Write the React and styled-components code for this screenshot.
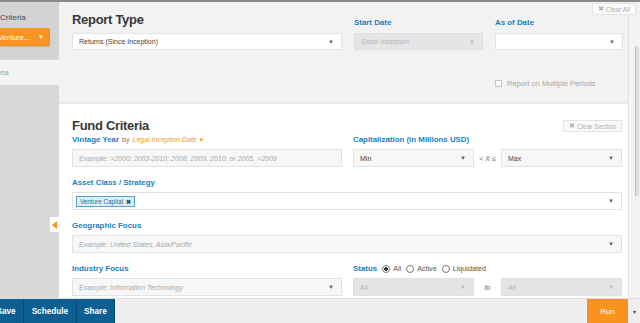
import React from "react";
import styled, { createGlobalStyle } from "styled-components";

const GlobalStyle = createGlobalStyle`
  html, body {
    margin: 0;
    padding: 0;
    background: #ffffff;
    font-family: "Liberation Sans", Arial, sans-serif;
  }
  * { box-sizing: border-box; }
`;

const Frame = styled.div`
  width: 640px;
  height: 323px;
  display: flex;
  flex-direction: column;
  border-top: 2px solid #8a8a8a;
  overflow: hidden;
`;

const Body = styled.div`
  flex: 1;
  min-height: 0;
  display: flex;
  position: relative;
`;

const Sidebar = styled.aside`
  width: 59px;
  background: #d8d8d8;
  overflow: hidden;
  display: flex;
  flex-direction: column;
`;

const SideHead = styled.div`
  background: #d3d3d3;
  height: 56px;
  padding-top: 11px;
`;

const SideLabel = styled.div`
  font-size: 8px;
  color: #4a4a4a;
  margin-left: 0;
  line-height: 10px;
`;

const OrangeButton = styled.div`
  margin-top: 5px;
  width: 50px;
  height: 18px;
  background: #f7931e;
  color: #fff;
  font-size: 7.5px;
  display: flex;
  align-items: center;
  justify-content: space-between;
  padding: 0 6px 0 0;
  border-radius: 0 2px 2px 0;
  box-shadow: 0 1px 1px rgba(0, 0, 0, 0.15);
  span:first-child { margin-left: -2px; }
`;

const SideItem = styled.div`
  margin-top: 2px;
  height: 25px;
  background: #f4f4f4;
  font-size: 7px;
  color: #9a9a9a;
  display: flex;
  align-items: center;
  span { margin-left: -14px; }
`;

const Main = styled.main`
  flex: 1;
  min-width: 0;
  display: flex;
  flex-direction: column;
  overflow: hidden;
`;

const ReportSection = styled.section`
  background: #f2f2f2;
  height: 102px;
  padding: 10px 5px 0 13px;
  border-bottom: 2px solid #e9e9e9;
  display: grid;
  grid-template-columns: 270px 129px 128px;
  grid-template-rows: auto auto 1fr;
  column-gap: 12px;
  row-gap: 5px;
  align-items: end;
`;

const Title = styled.h2`
  margin: 0;
  font-size: 13px;
  line-height: 16px;
  letter-spacing: -0.3px;
  font-weight: bold;
  color: #383838;
`;

const Label = styled.div`
  font-size: 7.9px;
  line-height: 10px;
  height: 10px;
  font-weight: bold;
  color: #1b7fc0;
  white-space: nowrap;
  display: flex;
  align-items: center;
  gap: 3px;
`;

const Small = styled.span`
  font-weight: normal;
  color: ${(p) => p.$color || "#777"};
  font-style: ${(p) => (p.$italic ? "italic" : "normal")};
  font-size: 7px;
`;

const Select = styled.div`
  height: ${(p) => p.$h || 18}px;
  width: ${(p) => (p.$w ? `${p.$w}px` : "100%")};
  background: ${(p) => (p.$disabled ? "#e5e5e5" : p.$soft ? "#f7f7f7" : "#ffffff")};
  border: 1px solid ${(p) => (p.$disabled ? "#e0e0e0" : "#e3e3e3")};
  display: flex;
  align-items: center;
  justify-content: space-between;
  padding: 0 7px 0 6px;
  font-size: 7px;
  color: ${(p) => (p.$disabled ? "#b5b5b5" : "#444")};
  font-style: ${(p) => (p.$placeholder ? "italic" : "normal")};
  ${(p) => p.$placeholder && "color: #a8a8a8;"}
  white-space: nowrap;
  overflow: hidden;
`;

const Caret = styled.span`
  font-size: 6px;
  color: ${(p) => (p.$light ? "#bbb" : "#666")};
  font-style: normal;
`;

const CheckRow = styled.div`
  grid-column: 3;
  align-self: start;
  margin-top: 24px;
  display: flex;
  align-items: center;
  gap: 5px;
  font-size: 7.5px;
  color: #a8a8a8;
`;

const CheckBox = styled.span`
  width: 7px;
  height: 7px;
  border: 1px solid #c4c4c4;
  background: #fff;
`;

const FundSection = styled.section`
  flex: 1;
  background: #ffffff;
  padding: 14px 6px 0 13px;
  display: flex;
  flex-direction: column;
`;

const TitleRow = styled.div`
  display: flex;
  justify-content: space-between;
  align-items: center;
  height: 16px;
  margin-bottom: 1px;
`;

const GhostButton = styled.div`
  font-size: 6.5px;
  color: #b0b0b0;
  border: 1px solid #e4e4e4;
  background: #f9f9f9;
  padding: 0 5px;
  height: 12px;
  display: flex;
  align-items: center;
  gap: 2px;
`;

const FieldGrid = styled.div`
  display: grid;
  grid-template-columns: 270px 269px;
  column-gap: 11px;
  row-gap: 11px;
`;

const Field = styled.div`
  grid-column: ${(p) => (p.$wide ? "1 / -1" : "auto")};
  display: flex;
  flex-direction: column;
  gap: 4px;
`;

const RangeRow = styled.div`
  display: flex;
  align-items: center;
`;

const RangeSep = styled.span`
  width: 27px;
  text-align: center;
  font-size: 7px;
  color: #666;
  font-style: ${(p) => (p.$italic ? "italic" : "normal")};
`;

const Tag = styled.span`
  font-size: 6.3px;
  color: #2b6a90;
  background: #dcf0fa;
  border: 1px solid #59a4cf;
  padding: 0 3px;
  height: 11px;
  display: inline-flex;
  align-items: center;
  gap: 3px;
  margin-left: -3px;
  b { color: #244e6b; font-size: 6px; }
`;

const Radio = styled.span`
  display: inline-flex;
  align-items: center;
  gap: 3px;
  font-weight: normal;
  color: #555;
  font-size: 7.2px;
  margin-left: 2px;
  &::before {
    content: "";
    width: 6px;
    height: 6px;
    border-radius: 50%;
    border: 1px solid #777;
    background: ${(p) => (p.$on ? "radial-gradient(circle, #333 0 1.6px, #fff 2px)" : "#fff")};
  }
`;

const ScrollTrack = styled.div`
  width: 12px;
  background: #f3f3f3;
  border-left: 1px solid #e2e2e2;
  display: flex;
  flex-direction: column;
  align-items: flex-end;
  padding-top: 44px;
`;

const ScrollThumb = styled.div`
  width: 4px;
  height: 150px;
  margin-right: 1px;
  background: #e0e0e0;
  border-left: 1px solid #bcbcbc;
`;

const ClearAll = styled(GhostButton)`
  position: absolute;
  top: 1px;
  right: 4px;
  background: #fafafa;
`;

const CollapseTab = styled.div`
  position: absolute;
  left: 50px;
  top: 215px;
  width: 9px;
  height: 15px;
  background: #ffffff;
  display: flex;
  align-items: center;
  justify-content: center;
  &::after {
    content: "";
    border-top: 4px solid transparent;
    border-bottom: 4px solid transparent;
    border-right: 5px solid #f7931e;
  }
`;

const Footer = styled.footer`
  height: 25px;
  background: #efefef;
  border-top: 1px solid #dedede;
  display: flex;
  align-items: stretch;
`;

const BlueButton = styled.div`
  background: #0d5f92;
  color: #fff;
  font-size: 8.2px;
  font-weight: bold;
  display: flex;
  align-items: center;
  padding: 0 7.5px;
  border-right: 1px solid #0a4c76;
  margin-left: ${(p) => p.$shift || 0}px;
`;

const Spacer = styled.div`
  flex: 1;
`;

const RunButton = styled.div`
  width: 41px;
  background: #f7931e;
  color: #fff;
  font-size: 8px;
  display: flex;
  align-items: center;
  justify-content: center;
`;

const FooterCaret = styled.div`
  width: 12px;
  font-size: 6px;
  color: #444;
  display: flex;
  align-items: center;
  justify-content: center;
`;

export default function App() {
  return (
    <>
      <GlobalStyle />
      <Frame>
        <Body>
          <Sidebar>
            <SideHead>
              <SideLabel>Criteria</SideLabel>
              <OrangeButton>
                <span>Venture...</span>
                <Caret style={{ color: "#fff" }}>▼</Caret>
              </OrangeButton>
            </SideHead>
            <SideItem>
              <span>Criteria</span>
            </SideItem>
          </Sidebar>

          <Main>
            <ReportSection>
              <Title>Report Type</Title>
              <Label>Start Date</Label>
              <Label>As of Date</Label>
              <Select $h={17}>
                Returns (Since Inception)
                <Caret>▼</Caret>
              </Select>
              <Select $h={17} $disabled>
                Since Inception
                <Caret $light>▼</Caret>
              </Select>
              <Select $h={17}>
                <span />
                <Caret>▼</Caret>
              </Select>
              <CheckRow>
                <CheckBox />
                Report on Multiple Periods
              </CheckRow>
            </ReportSection>

            <FundSection>
              <TitleRow>
                <Title>Fund Criteria</Title>
                <GhostButton>
                  <span>✖</span>Clear Section
                </GhostButton>
              </TitleRow>
              <FieldGrid>
                <Field>
                  <Label>
                    Vintage Year <Small>by</Small>
                    <Small $color="#f39a1f" $italic>
                      Legal Inception Date ▾
                    </Small>
                  </Label>
                  <Select $soft $placeholder>
                    Example: &gt;2000; 2003-2010; 2008, 2009, 2010; or 2005, &gt;2009
                  </Select>
                </Field>
                <Field>
                  <Label>Capitalization (in Millions USD)</Label>
                  <RangeRow>
                    <Select $soft $w={121}>
                      Min
                      <Caret>▼</Caret>
                    </Select>
                    <RangeSep>
                      &lt; <i>X</i> ≤
                    </RangeSep>
                    <Select $soft $w={121}>
                      Max
                      <Caret>▼</Caret>
                    </Select>
                  </RangeRow>
                </Field>
                <Field $wide>
                  <Label>Asset Class / Strategy</Label>
                  <Select>
                    <Tag>
                      Venture Capital <b>✖</b>
                    </Tag>
                    <Caret>▼</Caret>
                  </Select>
                </Field>
                <Field $wide>
                  <Label>Geographic Focus</Label>
                  <Select $soft $placeholder>
                    Example: United States, Asia/Pacific
                    <Caret>▼</Caret>
                  </Select>
                </Field>
                <Field>
                  <Label>Industry Focus</Label>
                  <Select $soft $placeholder>
                    Example: Information Technology
                    <Caret>▼</Caret>
                  </Select>
                </Field>
                <Field>
                  <Label>
                    Status
                    <Radio $on>All</Radio>
                    <Radio>Active</Radio>
                    <Radio>Liquidated</Radio>
                  </Label>
                  <RangeRow>
                    <Select $disabled $w={121}>
                      All
                      <Caret $light>▼</Caret>
                    </Select>
                    <RangeSep $italic>to</RangeSep>
                    <Select $disabled $w={121}>
                      All
                      <Caret $light>▼</Caret>
                    </Select>
                  </RangeRow>
                </Field>
              </FieldGrid>
            </FundSection>
          </Main>

          <ScrollTrack>
            <ScrollThumb />
          </ScrollTrack>

          <ClearAll>
            <span>✖</span>Clear All
          </ClearAll>
          <CollapseTab />
        </Body>

        <Footer>
          <BlueButton $shift={-11}>Save</BlueButton>
          <BlueButton>Schedule</BlueButton>
          <BlueButton>Share</BlueButton>
          <Spacer />
          <RunButton>Run</RunButton>
          <FooterCaret>▾</FooterCaret>
        </Footer>
      </Frame>
    </>
  );
}
